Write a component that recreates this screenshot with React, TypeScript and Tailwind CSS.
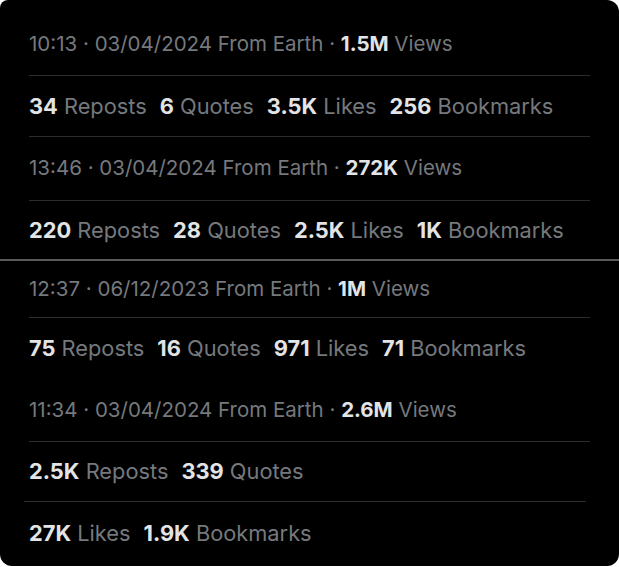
const font = { fontFamily: "Inter, 'Noto Sans', sans-serif" };

type Stat = [string, string];

function MetaRow({ time, date, views, h }: { time: string; date: string; views: string; h: string }) {
  return (
    <div className={`flex items-center px-[29px] text-[20.5px] text-[#75797d] ${h}`}>
      <span>
        {time} · {date} From Earth · <span className="font-bold text-[#e2e4e5]">{views}</span> Views
      </span>
    </div>
  );
}

function StatRow({ stats, h }: { stats: Stat[]; h: string }) {
  return (
    <div className={`flex items-center gap-[13px] px-[29px] text-[21.8px] text-[#75797d] ${h}`}>
      {stats.map(([n, label]) => (
        <span key={label}>
          <span className="font-bold text-[#e2e4e5]">{n}</span> {label}
        </span>
      ))}
    </div>
  );
}

function Divider() {
  return <div className="mx-[29px] h-px bg-[#2a2c2e]" />;
}

export default function App() {
  return (
    <div className="w-[619px] h-[567px] bg-white" style={font}>
      <div className="w-[619px] h-[566px] bg-black rounded-[12px] rounded-tl-[8px] overflow-hidden flex flex-col pt-[13px]">
        <MetaRow time="10:13" date="03/04/2024" views="1.5M" h="h-[62px]" />
        <Divider />
        <StatRow
          h="h-[60px]"
          stats={[
            ["34", "Reposts"],
            ["6", "Quotes"],
            ["3.5K", "Likes"],
            ["256", "Bookmarks"],
          ]}
        />
        <Divider />
        <MetaRow time="13:46" date="03/04/2024" views="272K" h="h-[63px]" />
        <Divider />
        <StatRow
          h="h-[58px]"
          stats={[
            ["220", "Reposts"],
            ["28", "Quotes"],
            ["2.5K", "Likes"],
            ["1K", "Bookmarks"],
          ]}
        />
        <div className="h-[2px] bg-[#5a5a5a]" />
        <MetaRow time="12:37" date="06/12/2023" views="1M" h="h-[56px]" />
        <Divider />
        <StatRow
          h="h-[61px]"
          stats={[
            ["75", "Reposts"],
            ["16", "Quotes"],
            ["971", "Likes"],
            ["71", "Bookmarks"],
          ]}
        />
        <MetaRow time="11:34" date="03/04/2024" views="2.6M" h="h-[62px]" />
        <Divider />
        <StatRow
          h="h-[59px]"
          stats={[
            ["2.5K", "Reposts"],
            ["339", "Quotes"],
          ]}
        />
        <div className="ml-[24px] mr-[33px] h-px bg-[#2a2c2e]" />
        <StatRow
          h="h-[62px]"
          stats={[
            ["27K", "Likes"],
            ["1.9K", "Bookmarks"],
          ]}
        />
      </div>
    </div>
  );
}
